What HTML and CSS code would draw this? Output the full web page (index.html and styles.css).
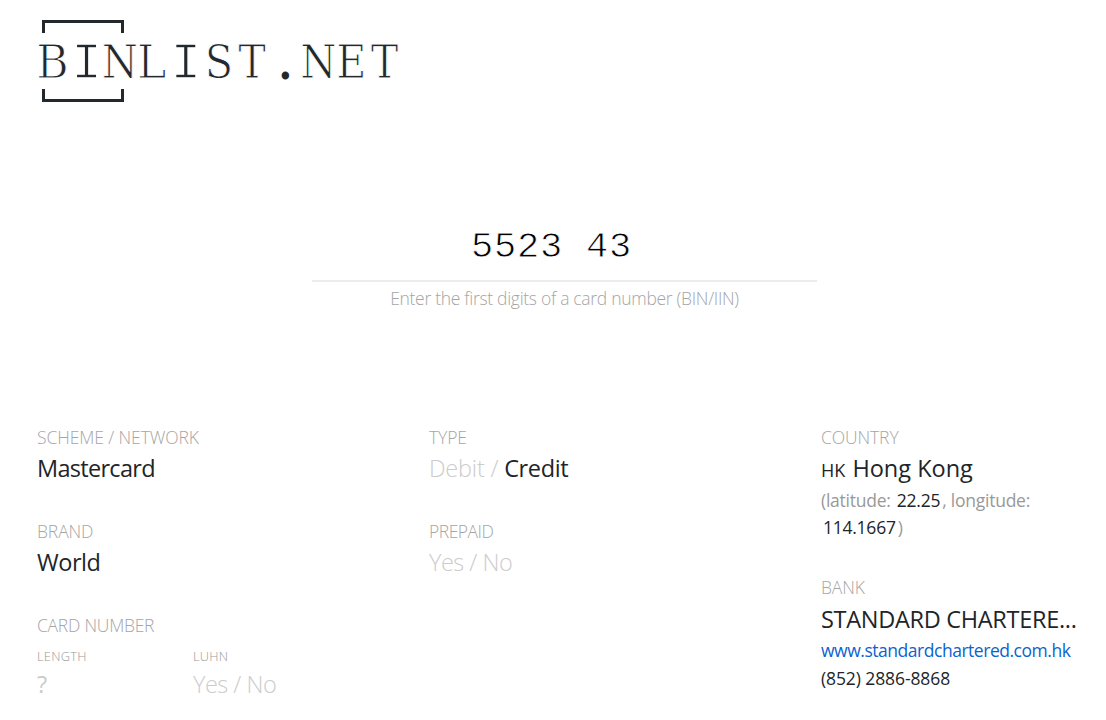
FILE: index.html
```html
<!DOCTYPE html>
<html lang="en">

<head>
    <meta charset="UTF-8">
    <meta name="viewport" content="width=device-width, initial-scale=1.0">
    <title>binlist.net</title>
    <link rel="stylesheet" href="styles.css">
</head>

<body>
    <header class="header">
        <h1 class="logo">
            <span class="bracket top"></span>
            <span class="logo-text"><span class="wide">B</span><span class="mono">I</span><span>N</span><span class="wide">L</span><span class="mono">I</span><span>S</span><span>T</span><span class="dot">.</span><span>N</span><span>E</span><span>T</span></span>
            <span class="bracket bottom"></span>
        </h1>
    </header>

    <!-- Lookup form -->
    <form class="lookup">
        <input class="bin-input" type="text" id="bin" value="5523 43">
        <label class="hint" for="bin">Enter the first digits of a card number (BIN/IIN)</label>
    </form>

    <!-- Result -->
    <main class="result">
        <div class="column">
            <div class="field">
                <h3>Scheme / Network</h3>
                <p class="value scheme">Mastercard</p>
            </div>
            <div class="field">
                <h3>Brand</h3>
                <p class="value">World</p>
            </div>
            <div class="field">
                <h3 class="card-number">Card Number</h3>
                <div class="split">
                    <div class="half">
                        <h4>Length</h4>
                        <p class="value unknown">?</p>
                    </div>
                    <div class="half">
                        <h4>Luhn</h4>
                        <p class="value muted">Yes / No</p>
                    </div>
                </div>
            </div>
        </div>

        <div class="column">
            <div class="field">
                <h3>Type</h3>
                <p class="value muted"><span class="debit">Debit / </span><span class="selected">Credit</span></p>
            </div>
            <div class="field">
                <h3 class="prepaid">Prepaid</h3>
                <p class="value muted">Yes / No</p>
            </div>
        </div>

        <div class="column">
            <div class="field country">
                <h3>Country</h3>
                <p class="value country-name"><span class="flag">HK</span> Hong Kong</p>
                <p class="coords">(latitude: <span class="number">22.25</span>, longitude: <span class="number">114.1667</span>)</p>
            </div>
            <div class="field">
                <h3>Bank</h3>
                <p class="value bank-name">STANDARD CHARTERE...</p>
                <p class="line"><a class="bank-url" href="#">www.standardchartered.com.hk</a></p>
                <p class="line bank-phone">(852) 2886-8868</p>
            </div>
        </div>
    </main>
</body>

</html>
```

FILE: styles.css
```css
* {
    box-sizing: border-box;
}

body {
    font-family: "Segoe UI", "Open Sans", sans-serif;
    font-size: 17.5px;
    line-height: 27px;
    color: #212529;
    background-color: #fff;
    margin: 0;
    height: 720px;
    overflow: hidden;
}

h1,
h3,
h4,
p {
    margin: 0;
    font-weight: 300;
}

.header {
    padding: 20px 37px 0;
}

.logo {
    display: flex;
    flex-direction: column;
    height: 82px;
    color: #23282d;
}

.logo-text {
    display: flex;
    align-items: baseline;
    height: 56px;
    font-family: "DejaVu Serif Condensed", "DejaVu Serif", serif;
    font-size: 46px;
    font-stretch: condensed;
    font-weight: 400;
    line-height: 58px;
    -webkit-text-stroke: 0.9px #fff;
}

/* every letter gets the same pitch */
.logo-text span {
    display: flex;
    justify-content: center;
    width: 33.1px;
}

.logo-text .wide {
    transform: translateX(-1px) scaleX(1.08);
    -webkit-text-stroke: 1.1px #fff;
}

.logo-text .mono {
    font-family: "Liberation Mono", monospace;
    font-size: 51px;
    -webkit-text-stroke: 1.5px #fff;
}

.logo-text .dot {
    -webkit-text-stroke: 2px #23282d;
}

.bracket {
    flex: none;
    width: 82px;
    height: 13px;
    margin-left: 5px;
    border: 3px solid #23282d;
}

.bracket.top {
    border-bottom: none;
}

.bracket.bottom {
    border-top: none;
}

/* Lookup form */
.lookup {
    display: flex;
    flex-direction: column;
    width: 505px;
    margin: 108px 0 0 312px;
}

.bin-input {
    width: 100%;
    height: 72px;
    padding: 4px 26px 0 0;
    border: none;
    border-bottom: 2px solid #ececec;
    outline: none;
    font-family: "Liberation Mono", monospace;
    font-size: 37px;
    letter-spacing: 0.8px;
    text-align: center;
    color: #000;
    background: none;
    -webkit-text-stroke: 0.8px #fff;
}

.hint {
    padding-top: 3px;
    font-weight: 300;
    letter-spacing: -0.3px;
    text-align: center;
    color: #a5a5a5;
}

/* Result */
.result {
    display: flex;
    gap: 72px;
    padding: 111.5px 0 0 37px;
}

.column {
    flex: none;
    width: 320px;
}

.column:last-child {
    width: 258px;
}

.field {
    margin-bottom: 31.7px;
}

.field h3 {
    font-size: 17.5px;
    line-height: 26.5px;
    letter-spacing: -0.1px;
    text-transform: uppercase;
    color: #a5a5a5;
}

.field .card-number {
    letter-spacing: -0.25px;
}

.field .prepaid {
    letter-spacing: -0.5px;
}

.field h4 {
    font-size: 12.8px;
    line-height: 20px;
    letter-spacing: 0.3px;
    text-transform: uppercase;
    color: #999;
}

.value {
    font-size: 23.5px;
    font-weight: 400;
    line-height: 36px;
    letter-spacing: -0.45px;
    white-space: nowrap;
}

.scheme {
    letter-spacing: -0.7px;
}

.muted {
    font-weight: 300;
    letter-spacing: -0.5px;
    color: #ccc;
}

.debit {
    letter-spacing: -0.22px;
}

.unknown {
    color: #ccc;
}

.selected {
    font-weight: 400;
    letter-spacing: -0.35px;
    color: #212529;
}

.split {
    display: flex;
    padding-top: 7.5px;
}

.half {
    width: 156px;
}

.country-name {
    letter-spacing: 0;
}

.flag {
    font-size: 18px;
    margin-right: 1px;
}

.coords {
    margin: -1.5px 0 1.5px;
    font-weight: 400;
    letter-spacing: -0.25px;
    color: #999;
}

.number {
    padding: 0 2px;
    color: #212529;
}

.country {
    margin-bottom: 33.5px;
}

.bank-name {
    letter-spacing: -0.3px;
}

.line {
    font-weight: 400;
}

.bank-url {
    letter-spacing: -0.47px;
    color: #0b63ce;
    text-decoration: none;
}

.bank-phone {
    padding-top: 1px;
    letter-spacing: -0.1px;
}
```
